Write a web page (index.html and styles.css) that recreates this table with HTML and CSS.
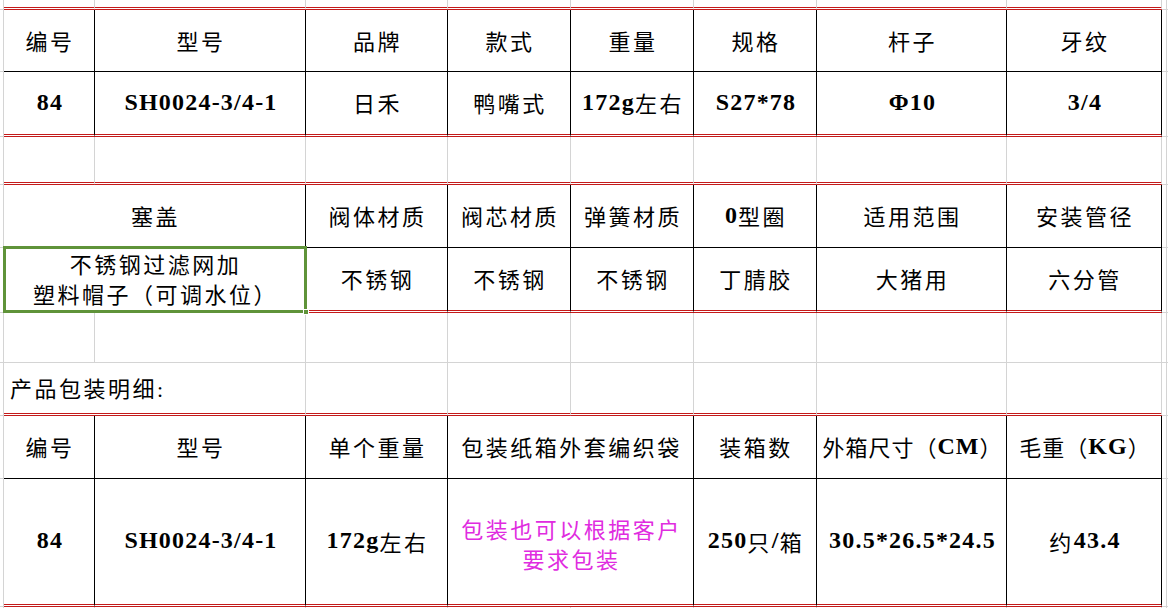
FILE: index.html
```html
<!DOCTYPE html>
<html lang="zh-CN">
<head>
<meta charset="utf-8">
<title>产品参数</title>
<link rel="stylesheet" href="styles.css">
</head>
<body>
<div class="sheet">
  <!-- row 0 -->
  <div class="c"></div>
  <div class="c rb"></div><div class="c rb"></div><div class="c rb"></div><div class="c rb"></div>
  <div class="c rb"></div><div class="c rb"></div><div class="c rb"></div><div class="c rb"></div>
  <div class="c"></div><div class="c end"></div>

  <!-- header 1 -->
  <div class="c"></div>
  <div class="c t hb">编号</div>
  <div class="c t hb">型号</div>
  <div class="c t hb">品牌</div>
  <div class="c t hb">款式</div>
  <div class="c t hb">重量</div>
  <div class="c t hb">规格</div>
  <div class="c t hb">杆子</div>
  <div class="c t hb">牙纹</div>
  <div class="c"></div><div class="c end"></div>

  <!-- data 1 -->
  <div class="c"></div>
  <div class="c t rb"><span class="n">84</span></div>
  <div class="c t rb"><span class="n">SH0024-3/4-1</span></div>
  <div class="c t rb">日禾</div>
  <div class="c t rb">鸭嘴式</div>
  <div class="c t rb"><span class="n">172g</span>左右</div>
  <div class="c t rb"><span class="n">S27*78</span></div>
  <div class="c t rb"><span class="n">Φ10</span></div>
  <div class="c t rb"><span class="n">3/4</span></div>
  <div class="c"></div><div class="c end"></div>

  <!-- gap -->
  <div class="c"></div>
  <div class="c rb"></div><div class="c rb"></div><div class="c rb"></div><div class="c rb"></div>
  <div class="c rb"></div><div class="c rb"></div><div class="c rb"></div><div class="c rb"></div>
  <div class="c"></div><div class="c end"></div>

  <!-- header 2 -->
  <div class="c"></div>
  <div class="c t hb s2">塞盖</div>
  <div class="c t hb">阀体材质</div>
  <div class="c t hb">阀芯材质</div>
  <div class="c t hb">弹簧材质</div>
  <div class="c t hb"><span class="n">0</span>型圈</div>
  <div class="c t hb">适用范围</div>
  <div class="c t hb">安装管径</div>
  <div class="c"></div><div class="c end"></div>

  <!-- data 2 -->
  <div class="c"></div>
  <div class="c t rb s2 two">不锈钢过滤网加<br>塑料帽子（可调水位）</div>
  <div class="c t rb">不锈钢</div>
  <div class="c t rb">不锈钢</div>
  <div class="c t rb">不锈钢</div>
  <div class="c t rb">丁腈胶</div>
  <div class="c t rb">大猪用</div>
  <div class="c t rb">六分管</div>
  <div class="c"></div><div class="c end"></div>

  <!-- empty -->
  <div class="c"></div>
  <div class="c"></div><div class="c"></div><div class="c"></div><div class="c"></div>
  <div class="c"></div><div class="c"></div><div class="c"></div><div class="c"></div>
  <div class="c"></div><div class="c end"></div>

  <!-- title -->
  <div class="c"></div>
  <div class="c rb s2 title">产品包装明细:</div>
  <div class="c rb"></div><div class="c rb"></div><div class="c rb"></div>
  <div class="c rb"></div><div class="c rb"></div><div class="c rb"></div>
  <div class="c"></div><div class="c end"></div>

  <!-- header 3 -->
  <div class="c"></div>
  <div class="c t hb">编号</div>
  <div class="c t hb">型号</div>
  <div class="c t hb">单个重量</div>
  <div class="c t hb s2">包装纸箱外套编织袋</div>
  <div class="c t hb">装箱数</div>
  <div class="c t hb tight">外箱尺寸（<span class="n">CM</span>）</div>
  <div class="c t hb tight">毛重（<span class="n">KG</span>）</div>
  <div class="c"></div><div class="c end"></div>

  <!-- data 3 -->
  <div class="c"></div>
  <div class="c t rb"><span class="n">84</span></div>
  <div class="c t rb"><span class="n">SH0024-3/4-1</span></div>
  <div class="c t rb"><span class="n">172g</span>左右</div>
  <div class="c t rb s2 two pink">包装也可以根据客户<br>要求包装</div>
  <div class="c t rb"><span class="n">250</span>只<span class="n">/</span>箱</div>
  <div class="c t rb"><span class="n">30.5*26.5*24.5</span></div>
  <div class="c t rb">约<span class="n">43.4</span></div>
  <div class="c"></div><div class="c end"></div>

  <!-- bottom -->
  <div class="c"></div>
  <div class="c"></div><div class="c"></div><div class="c"></div><div class="c"></div>
  <div class="c"></div><div class="c"></div><div class="c"></div><div class="c"></div>
  <div class="c"></div><div class="c end"></div>

  <div class="selection"></div>
  <div class="handle"></div>
</div>
</body>
</html>
```

FILE: styles.css
```css
html, body {
  margin: 0;
  padding: 0;
  background: #ffffff;
}

body {
  width: 1168px;
  height: 608px;
  overflow: hidden;
  font-family: "Liberation Serif", "Noto Sans CJK SC", serif;
  font-size: 22px;
  font-weight: 400;
  color: #000000;
}

.sheet {
  position: relative;
  display: grid;
  grid-template-columns: 4px 91px 211px 142px 123px 123px 123px 190px 155px 5px 1fr;
  grid-template-rows: 10px 62px 65px 48px 63px 65px 50px 53px 63px 128px 1fr;
  width: 1168px;
  height: 608px;
}

.c {
  box-sizing: border-box;
  border-right: 1px solid #d4d4d4;
  border-bottom: 1px solid #d4d4d4;
  display: flex;
  align-items: center;
  justify-content: center;
  text-align: center;
  letter-spacing: 2.5px;
  padding-left: 2px;
  padding-bottom: 2px;
  white-space: nowrap;
  overflow: visible;
}

.c.end {
  border-right: none;
}

.t {
  border-right-color: #000000;
}

.hb {
  border-bottom: 1px solid #000000;
}

.rb {
  border-bottom: 3px double #c41a1a;
}

.s2 {
  grid-column: span 2;
}

.n {
  font-size: 24px;
  font-weight: 700;
  letter-spacing: 1.2px;
}

.tight {
  letter-spacing: 1px;
}

.tight .n {
  letter-spacing: 1px;
}

.two {
  line-height: 30px;
  padding-top: 4px;
  padding-bottom: 0;
}

.pink {
  color: #e02ce0;
  padding-top: 8px;
}

.title {
  justify-content: flex-start;
  padding-left: 6px;
  padding-top: 0;
  padding-bottom: 2px;
}

.selection {
  position: absolute;
  left: 3px;
  top: 246px;
  width: 304px;
  height: 67px;
  box-sizing: border-box;
  border: 3px solid #5f9339;
  pointer-events: none;
}

.handle {
  position: absolute;
  left: 303px;
  top: 309px;
  width: 6px;
  height: 6px;
  box-sizing: border-box;
  background: #5f9339;
  border: 1px solid #ffffff;
}
```
